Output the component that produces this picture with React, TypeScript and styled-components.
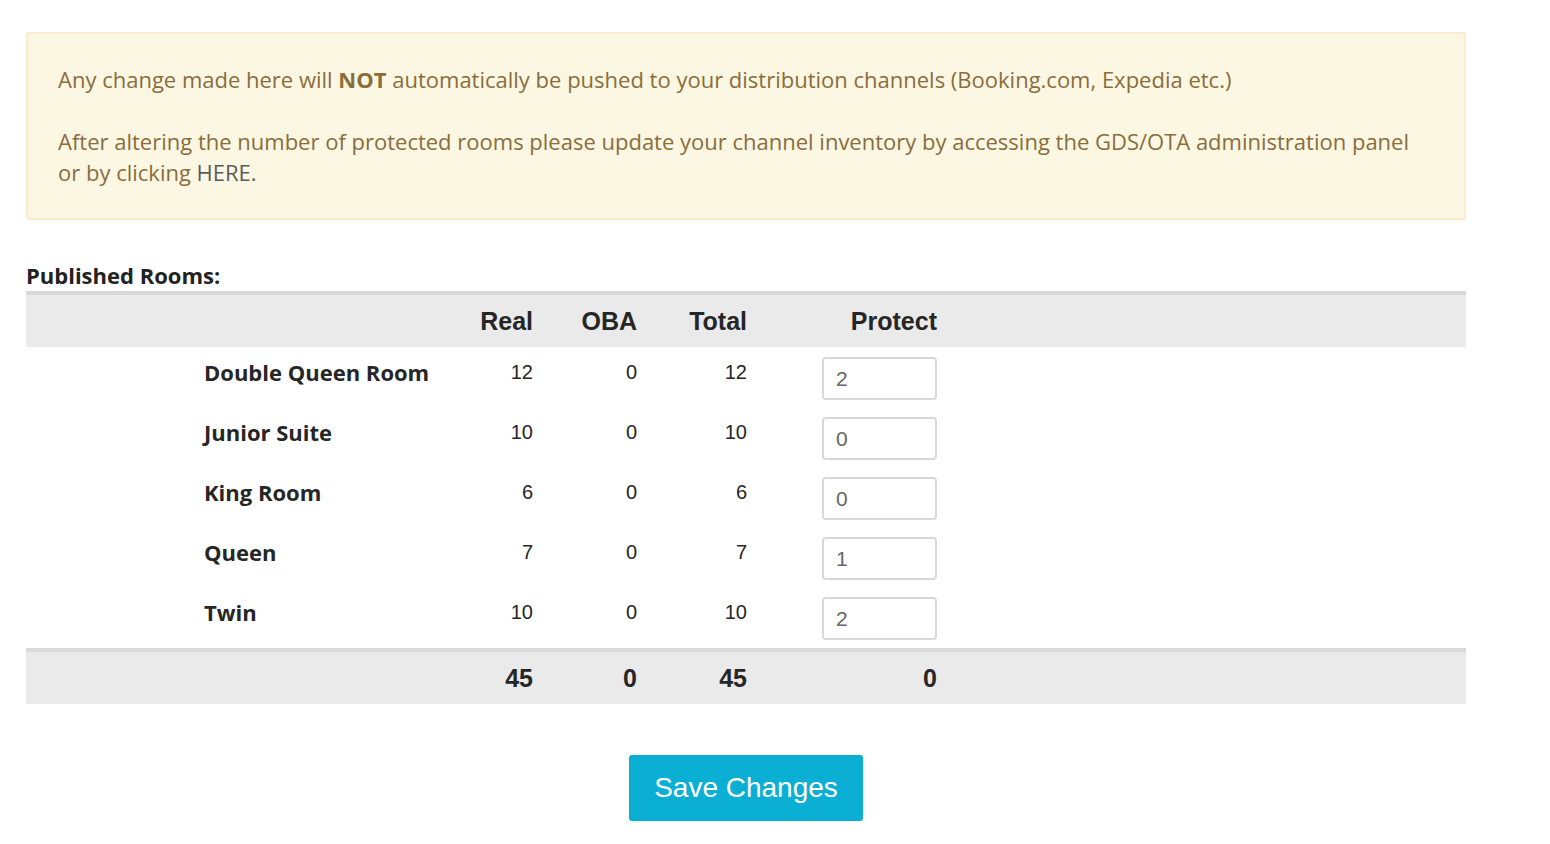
import React from "react";
import styled, { createGlobalStyle } from "styled-components";

const GlobalStyle = createGlobalStyle`
  html, body { margin: 0; padding: 0; background: #ffffff; }
  body { font-family: "Open Sans", "Liberation Sans", sans-serif; }
`;

const Page = styled.div`
  width: 1440px;
  padding: 32px 0 0 26px;
`;

const Alert = styled.div`
  background: #fcf7e3;
  border: 2px solid #faebcc;
  border-radius: 3px;
  padding: 30px 30px 30px 30px;
  color: #8a6d3b;
  font-family: "Open Sans", sans-serif;
  font-size: 22px;
  line-height: 31px;
  strong { font-weight: 700; }
`;

const Para = styled.p`
  margin: 0;
  & + & { margin-top: 31px; }
`;

const Link = styled.a`
  color: #5b5b5b;
  text-decoration: none;
`;

const SectionTitle = styled.div`
  margin-top: 42px;
  font-family: "Open Sans", sans-serif;
  font-weight: 700;
  font-size: 22px;
  line-height: 26px;
  color: #222;
`;

const Grid = styled.div`
  display: grid;
  grid-template-columns: 170px 265px 80px 104px 110px 190px 1fr;
  margin-top: 3px;
`;

const HeadRow = styled.div`
  display: contents;
`;

const HeadCell = styled.div<{ $right?: boolean; $foot?: boolean }>`
  background: #eaeaea;
  border-top: 4px solid #dadada;
  height: 52px;
  padding: 0 8px;
  display: flex;
  align-items: center;
  justify-content: ${(p) => (p.$right ? "flex-end" : "flex-start")};
  font-family: "Liberation Sans", Arial, sans-serif;
  font-weight: 700;
  font-size: 25px;
  color: #262626;
  ${(p) => (p.$foot ? "margin-top: 1px;" : "")}
`;

const Cell = styled.div<{ $right?: boolean; $name?: boolean }>`
  height: 60px;
  box-sizing: border-box;
  padding: 10px 8px 0 8px;
  line-height: 30px;
  text-align: ${(p) => (p.$right ? "right" : "left")};
  font-family: ${(p) =>
    p.$name ? `"Open Sans", sans-serif` : `"Liberation Sans", Arial, sans-serif`};
  font-weight: ${(p) => (p.$name ? 700 : 400)};
  font-size: ${(p) => (p.$name ? "22px" : "20px")};
  color: #262626;
`;

const ProtectInput = styled.input`
  box-sizing: border-box;
  width: 115px;
  height: 43px;
  margin-left: auto;
  display: block;
  border: 2px solid #d8d8d8;
  border-radius: 4px;
  padding: 0 12px;
  font-family: "Liberation Sans", Arial, sans-serif;
  font-size: 21px;
  color: #666;
  background: #fff;
  outline: none;
`;

const ButtonRow = styled.div`
  display: flex;
  justify-content: center;
  margin-top: 51px;
`;

const SaveButton = styled.button`
  background: #0bafd4;
  color: #fff;
  border: none;
  border-radius: 3px;
  height: 66px;
  padding: 0 25px;
  font-family: "Liberation Sans", Arial, sans-serif;
  font-size: 28px;
  cursor: pointer;
`;

const rooms = [
  { name: "Double Queen Room", real: 12, oba: 0, total: 12, protect: "2" },
  { name: "Junior Suite", real: 10, oba: 0, total: 10, protect: "0" },
  { name: "King Room", real: 6, oba: 0, total: 6, protect: "0" },
  { name: "Queen", real: 7, oba: 0, total: 7, protect: "1" },
  { name: "Twin", real: 10, oba: 0, total: 10, protect: "2" },
];

export default function App() {
  return (
    <>
      <GlobalStyle />
      <Page>
        <Alert>
          <Para>
            Any change made here will <strong>NOT</strong> automatically be pushed to your
            distribution channels (Booking.com, Expedia etc.)
          </Para>
          <Para>
            After altering the number of protected rooms please update your channel inventory by
            accessing the GDS/OTA administration panel
            <br />
            or by clicking <Link href="#">HERE.</Link>
          </Para>
        </Alert>

        <SectionTitle>Published Rooms:</SectionTitle>

        <Grid>
          <HeadRow>
            <HeadCell />
            <HeadCell />
            <HeadCell $right>Real</HeadCell>
            <HeadCell $right>OBA</HeadCell>
            <HeadCell $right>Total</HeadCell>
            <HeadCell $right>Protect</HeadCell>
            <HeadCell />
          </HeadRow>

          {rooms.map((r) => (
            <React.Fragment key={r.name}>
              <Cell />
              <Cell $name>{r.name}</Cell>
              <Cell $right>{r.real}</Cell>
              <Cell $right>{r.oba}</Cell>
              <Cell $right>{r.total}</Cell>
              <Cell $right>
                <ProtectInput defaultValue={r.protect} />
              </Cell>
              <Cell />
            </React.Fragment>
          ))}

          <HeadRow>
            <HeadCell $foot />
            <HeadCell $foot />
            <HeadCell $foot $right>45</HeadCell>
            <HeadCell $foot $right>0</HeadCell>
            <HeadCell $foot $right>45</HeadCell>
            <HeadCell $foot $right>0</HeadCell>
            <HeadCell $foot />
          </HeadRow>
        </Grid>

        <ButtonRow>
          <SaveButton>Save Changes</SaveButton>
        </ButtonRow>
      </Page>
    </>
  );
}
